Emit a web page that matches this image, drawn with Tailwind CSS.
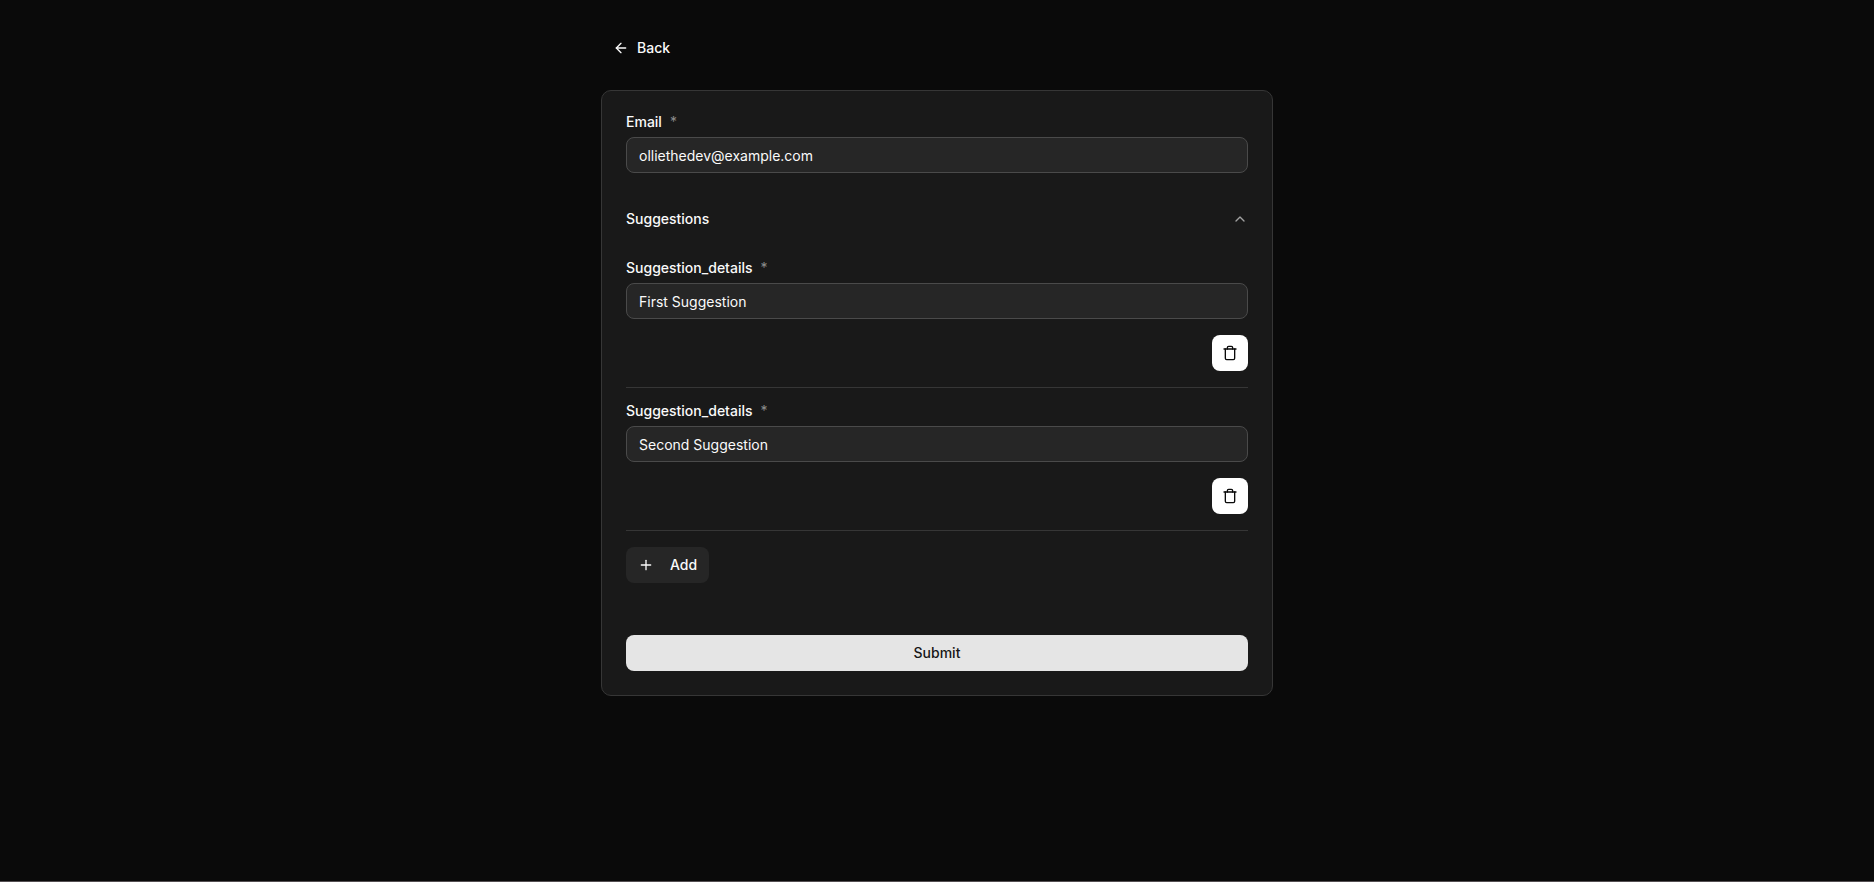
<!DOCTYPE html>
<html lang="en">
<head>
  <meta charset="UTF-8" />
  <meta name="viewport" content="width=device-width, initial-scale=1.0"/>
  <title>Suggestions</title>
  <script src="https://cdn.jsdelivr.net/npm/@tailwindcss/browser@4"></script>
</head>
<body class="min-h-screen border-b border-[#544f52] bg-[#0a0a0a] font-['Inter',sans-serif] text-sm text-neutral-50 antialiased">
  <main class="mx-auto max-w-2xl py-[30px]">
    <!-- Back -->
    <button type="button" class="mb-6 flex h-9 items-center gap-2 rounded-md px-3 font-medium">
      <svg class="size-4" viewBox="0 0 24 24" fill="none" stroke="currentColor" stroke-width="2" stroke-linecap="round" stroke-linejoin="round"><path d="m12 19-7-7 7-7"/><path d="M19 12H5"/></svg>
      Back
    </button>

    <form class="rounded-[10px] border border-[#363636] bg-[#191919] p-6">
      <!-- Email -->
      <div class="mb-5 space-y-2">
        <label for="email" class="flex gap-2 leading-[14px] font-medium">Email <span class="font-normal text-[#8c8c8c]">*</span></label>
        <input id="email" type="email" value="olliethedev@example.com" class="block h-9 w-full rounded-lg border border-[#4a4a4a] bg-[#262626] px-3" />
      </div>

      <!-- Suggestions -->
      <button type="button" class="flex w-full items-center justify-between py-4 font-medium">
        Suggestions
        <svg class="size-4 text-neutral-400" viewBox="0 0 24 24" fill="none" stroke="currentColor" stroke-width="2" stroke-linecap="round" stroke-linejoin="round"><path d="m18 15-6-6-6 6"/></svg>
      </button>

      <div class="mt-4 border-b border-[#363636] pb-4">
        <div class="space-y-2">
          <label for="suggestion-0" class="flex gap-2 leading-[14px] font-medium">Suggestion_details <span class="font-normal text-[#8c8c8c]">*</span></label>
          <input id="suggestion-0" type="text" value="First Suggestion" class="block h-9 w-full rounded-lg border border-[#4a4a4a] bg-[#262626] px-3" />
        </div>
        <button type="button" aria-label="Remove" class="mt-4 ml-auto flex size-9 items-center justify-center rounded-lg bg-white text-neutral-950">
          <svg class="size-4" viewBox="0 0 24 24" fill="none" stroke="currentColor" stroke-width="2" stroke-linecap="round" stroke-linejoin="round"><path d="M3 6h18"/><path d="M19 6v14c0 1-1 2-2 2H7c-1 0-2-1-2-2V6"/><path d="M8 6V4c0-1 1-2 2-2h4c1 0 2 1 2 2v2"/></svg>
        </button>
      </div>

      <div class="mt-4 border-b border-[#363636] pb-4">
        <div class="space-y-2">
          <label for="suggestion-1" class="flex gap-2 leading-[14px] font-medium">Suggestion_details <span class="font-normal text-[#8c8c8c]">*</span></label>
          <input id="suggestion-1" type="text" value="Second Suggestion" class="block h-9 w-full rounded-lg border border-[#4a4a4a] bg-[#262626] px-3" />
        </div>
        <button type="button" aria-label="Remove" class="mt-4 ml-auto flex size-9 items-center justify-center rounded-lg bg-white text-neutral-950">
          <svg class="size-4" viewBox="0 0 24 24" fill="none" stroke="currentColor" stroke-width="2" stroke-linecap="round" stroke-linejoin="round"><path d="M3 6h18"/><path d="M19 6v14c0 1-1 2-2 2H7c-1 0-2-1-2-2V6"/><path d="M8 6V4c0-1 1-2 2-2h4c1 0 2 1 2 2v2"/></svg>
        </button>
      </div>

      <button type="button" class="mt-4 flex h-9 items-center gap-4 rounded-lg bg-[#262626] px-3 font-medium">
        <svg class="size-4" viewBox="0 0 24 24" fill="none" stroke="currentColor" stroke-width="2" stroke-linecap="round" stroke-linejoin="round"><path d="M5 12h14"/><path d="M12 5v14"/></svg>
        Add
      </button>

      <button type="submit" class="mt-[52px] h-9 w-full rounded-lg bg-[#e5e5e5] font-medium text-neutral-900">Submit</button>
    </form>
  </main>
</body>
</html>
